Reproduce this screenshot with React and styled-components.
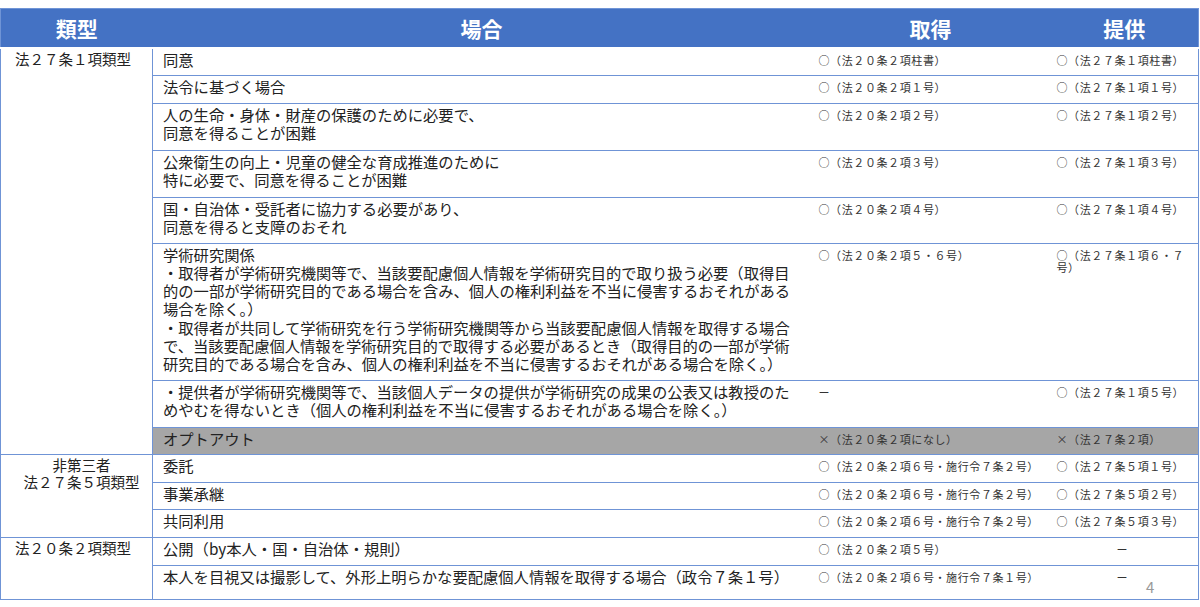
import React from "react";
import styled, { createGlobalStyle } from "styled-components";

const Global = createGlobalStyle`
  body { margin: 0; background: #fff; font-family: "Noto Sans CJK JP", "Noto Sans", sans-serif; }
`;

const Page = styled.div`
  position: relative;
  width: 1200px;
  height: 607px;
  padding-top: 8px;
  box-sizing: border-box;
`;

const Table = styled.table`
  width: 1198px;
  border-collapse: collapse;
  table-layout: fixed;
  border: 1.5px solid #6f94d6;
`;

const Th = styled.th`
  background: #4472c4;
  color: #fff;
  font-size: 21px;
  font-weight: 700;
  height: 38px;
  padding: 0;
  text-align: center;
  border-bottom: 2px solid #fff;
`;

const Tr = styled.tr`
  height: ${(p) => p.h}px;
  background: ${(p) => (p.gray ? "#a6a6a6" : "#fff")};
  border-top: 1px solid #6f94d6;
`;

const TypeCell = styled.td`
  vertical-align: top;
  font-size: 14.5px;
  color: #222;
  padding: 1px 4px 0 14px;
  line-height: 17.5px;
  text-align: ${(p) => (p.center ? "center" : "left")};
  border-right: 1px solid #6f94d6;
  background: #fff;
  border-top: 1.5px solid #6f94d6;
`;

const CaseCell = styled.td`
  vertical-align: top;
  font-size: 15.3px;
  color: #222;
  line-height: 18.3px;
  padding: 1px 6px 0 10px;
`;

const SmallCell = styled.td`
  vertical-align: top;
  font-size: 11px;
  color: #333;
  line-height: 12px;
  letter-spacing: 0.6px;
  padding: 5px 4px 0 ${(p) => (p.pl ?? 8)}px;
  text-align: ${(p) => (p.center ? "center" : "left")};
`;

const PageNo = styled.div`
  position: absolute;
  left: 1146px;
  top: 576px;
  font-size: 15px;
  color: #999;
`;

const rows = [
  { h: 27, c: "同意", a: "○（法２０条２項柱書）", p: "○（法２７条１項柱書）" },
  { h: 28, c: "法令に基づく場合", a: "○（法２０条２項１号）", p: "○（法２７条１項１号）" },
  { h: 47, c: "人の生命・身体・財産の保護のために必要で、\n同意を得ることが困難", a: "○（法２０条２項２号）", p: "○（法２７条１項２号）" },
  { h: 47, c: "公衆衛生の向上・児童の健全な育成推進のために\n特に必要で、同意を得ることが困難", a: "○（法２０条２項３号）", p: "○（法２７条１項３号）" },
  { h: 46, c: "国・自治体・受託者に協力する必要があり、\n同意を得ると支障のおそれ", a: "○（法２０条２項４号）", p: "○（法２７条１項４号）" },
  { h: 137, c: "学術研究関係\n・取得者が学術研究機関等で、当該要配慮個人情報を学術研究目的で取り扱う必要（取得目的の一部が学術研究目的である場合を含み、個人の権利利益を不当に侵害するおそれがある場合を除く。）\n・取得者が共同して学術研究を行う学術研究機関等から当該要配慮個人情報を取得する場合で、当該要配慮個人情報を学術研究目的で取得する必要があるとき（取得目的の一部が学術研究目的である場合を含み、個人の権利利益を不当に侵害するおそれがある場合を除く。）", a: "○（法２０条２項５・６号）", p: "○（法２７条１項６・７号）" },
  { h: 47, c: "・提供者が学術研究機関等で、当該個人データの提供が学術研究の成果の公表又は教授のためやむを得ないとき（個人の権利利益を不当に侵害するおそれがある場合を除く。）", a: "ー", p: "○（法２７条１項５号）" },
  { h: 27, gray: true, c: "オプトアウト", a: "×（法２０条２項になし）", p: "×（法２７条２項）" },
  { h: 28, c: "委託", a: "○（法２０条２項６号・施行令７条２号）", p: "○（法２７条５項１号）" },
  { h: 27, c: "事業承継", a: "○（法２０条２項６号・施行令７条２号）", p: "○（法２７条５項２号）" },
  { h: 28, c: "共同利用", a: "○（法２０条２項６号・施行令７条２号）", p: "○（法２７条５項３号）" },
  { h: 28, c: "公開（by本人・国・自治体・規則）", a: "○（法２０条２項５号）", p: "ー", pc: true },
  { h: 34, c: "本人を目視又は撮影して、外形上明らかな要配慮個人情報を取得する場合（政令７条１号）", a: "○（法２０条２項６号・施行令７条１号）", p: "ー", pc: true },
];

const types = {
  0: { span: 8, text: "法２７条１項類型" },
  8: { span: 3, text: "非第三者\n法２７条５項類型", center: true },
  11: { span: 2, text: "法２０条２項類型" },
};

const Lines = ({ text }) =>
  text.split("\n").map((l, i) => (
    <React.Fragment key={i}>
      {i > 0 && <br />}
      {l}
    </React.Fragment>
  ));

export default function App() {
  return (
    <Page>
      <Global />
      <Table>
        <colgroup>
          <col style={{ width: 152 }} />
          <col style={{ width: 658 }} />
          <col style={{ width: 240 }} />
          <col style={{ width: 148 }} />
        </colgroup>
        <thead>
          <tr>
            <Th>類型</Th>
            <Th>場合</Th>
            <Th>取得</Th>
            <Th>提供</Th>
          </tr>
        </thead>
        <tbody>
          {rows.map((r, i) => (
            <Tr key={i} h={r.h} gray={r.gray}>
              {types[i] && (
                <TypeCell rowSpan={types[i].span} center={types[i].center}>
                  <Lines text={types[i].text} />
                </TypeCell>
              )}
              <CaseCell>
                <Lines text={r.c} />
              </CaseCell>
              <SmallCell>{r.a}</SmallCell>
              <SmallCell pl={r.pc ? 0 : 6} center={r.pc}>
                {r.p}
              </SmallCell>
            </Tr>
          ))}
        </tbody>
      </Table>
      <PageNo>4</PageNo>
    </Page>
  );
}
